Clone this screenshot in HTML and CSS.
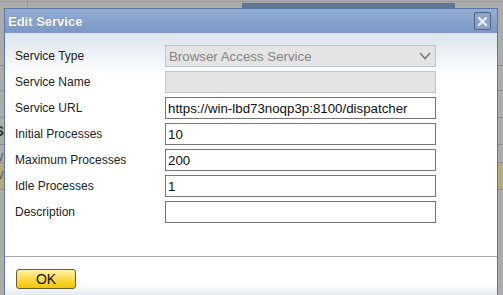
FILE: index.html
```html
<!DOCTYPE html>
<html>
<head>
<meta charset="utf-8">
<link rel="stylesheet" href="styles.css">
</head>
<body>
<div class="page">
  <div class="topline"></div>
  <div class="topbar"></div>
  <div class="vline"></div>
  <div class="row r1"></div>
  <div class="row r2"></div>
  <div class="row r3"><span class="bgtext">S</span></div>
  <div class="row r4"><span class="bgtext thin">W</span></div>
  <div class="row r5"><span class="bgtext thin">W</span></div>
</div>
<div class="dialog">
  <div class="titlebar">
    <span class="title">Edit Service</span>
    <span class="close">
      <svg width="11" height="11" viewBox="0 0 11 11"><path d="M2 2 L9 9 M9 2 L2 9" stroke="#e6efff" stroke-width="2.4" stroke-linecap="round"/></svg>
    </span>
  </div>
  <div class="body">
    <div class="form">
      <label class="lbl">Service Type</label>
      <div class="field select disabled"><span>Browser Access Service</span>
        <svg class="chev" width="12" height="8" viewBox="0 0 12 8"><path d="M1 1 L6 6.5 L11 1" fill="none" stroke="#7a7a7a" stroke-width="1.6"/></svg>
      </div>
      <label class="lbl">Service Name</label>
      <div class="field disabled"></div>
      <label class="lbl">Service URL</label>
      <div class="field">https://win-lbd73noqp3p:8100/dispatcher</div>
      <label class="lbl">Initial Processes</label>
      <div class="field">10</div>
      <label class="lbl">Maximum Processes</label>
      <div class="field">200</div>
      <label class="lbl">Idle Processes</label>
      <div class="field">1</div>
      <label class="lbl">Description</label>
      <div class="field"></div>
    </div>
    <div class="footer">
      <button class="ok">OK</button>
    </div>
  </div>
</div>
</body>
</html>
```
FILE: styles.css
```css
html, body {
  margin: 0;
  padding: 0;
  width: 503px;
  height: 295px;
  overflow: hidden;
  background: #acacac;
  font-family: "Liberation Sans", Arial, sans-serif;
}
.page {
  position: relative;
  width: 503px;
  height: 295px;
}
.topline {
  position: absolute;
  left: 0; top: 1px;
  width: 503px; height: 1px;
  background: #9a9a9a;
}
.topbar {
  position: absolute;
  left: 242px; top: 3px;
  width: 213px; height: 6px;
  background: #5f7591;
}
.vline {
  position: absolute;
  left: 27px; top: 0;
  width: 1px; height: 9px;
  background: #999;
}
.row {
  position: absolute;
  left: 0;
  width: 503px;
  border-top: 1px solid #8f8f8f;
}
.r1 { top: 65px; height: 25px; }
.r2 { top: 90px; height: 27px; }
.r3 { top: 117px; height: 27px; }
.r4 { top: 144px; height: 18px; }
.r5 { top: 162px; height: 26px; background: #b7a97e; border-bottom: 1px solid #8f8f8f; }
.bgtext {
  position: absolute;
  left: -6px; top: 4px;
  font-size: 15px;
  font-weight: bold;
  color: #333;
}
.bgtext.thin { font-weight: normal; font-size: 11px; left: -7px; top: 6px; color: #555; }

.dialog {
  position: absolute;
  left: 4px; top: 8px;
  width: 492px;
  height: 286px;
  border: 1px solid #5877ab;
  border-bottom: 0;
  background: #fff;
  display: flex;
  flex-direction: column;
}
.titlebar {
  height: 24px;
  background: linear-gradient(#93aed4, #7a98c5);
  display: flex;
  align-items: center;
  justify-content: space-between;
  padding: 0 6px 0 3px;
}
.title {
  color: #fff;
  font-weight: bold;
  font-size: 13px;
  text-shadow: 0 0 1px #5a78a8;
}
.close {
  width: 15px; height: 16px;
  border: 1px solid #55647c;
  border-radius: 2px;
  background: #8ca4c9;
  display: flex;
  align-items: center;
  justify-content: center;
}
.body {
  flex: 1;
  background: linear-gradient(#dbe3ee 0px, #ffffff 42px);
  display: flex;
  flex-direction: column;
}
.form {
  display: grid;
  grid-template-columns: 150px 271px;
  grid-auto-rows: 22px;
  row-gap: 4px;
  padding: 12px 0 0 10px;
  align-items: center;
}
.lbl {
  font-size: 12px;
  color: #222;
}
.field {
  box-sizing: border-box;
  height: 22px;
  border: 1px solid #767676;
  background: #fff;
  font-size: 13.3px;
  color: #111;
  padding-left: 2px;
  display: flex;
  align-items: center;
}
.field.disabled {
  background: #e4e4e4;
  border-color: #c5c5c5;
  color: #858585;
}
.select {
  justify-content: space-between;
  padding-left: 3px;
  padding-right: 4px;
}
.footer {
  margin-top: 33px;
  border-top: 1px solid #a9a9a9;
  padding: 12px 0 0 11px;
  flex: 1;
  background: linear-gradient(#fff 0px, #fff 26px, #e6ebf2 38px);
}
.ok {
  width: 60px;
  height: 20px;
  border: 1px solid #6b5d33;
  border-radius: 3px;
  background: linear-gradient(#fff3a6, #fbd63a 60%, #f3c400);
  font-family: "Liberation Sans", Arial, sans-serif;
  font-size: 14px;
  color: #111;
  padding: 0;
  line-height: 18px;
}
```
